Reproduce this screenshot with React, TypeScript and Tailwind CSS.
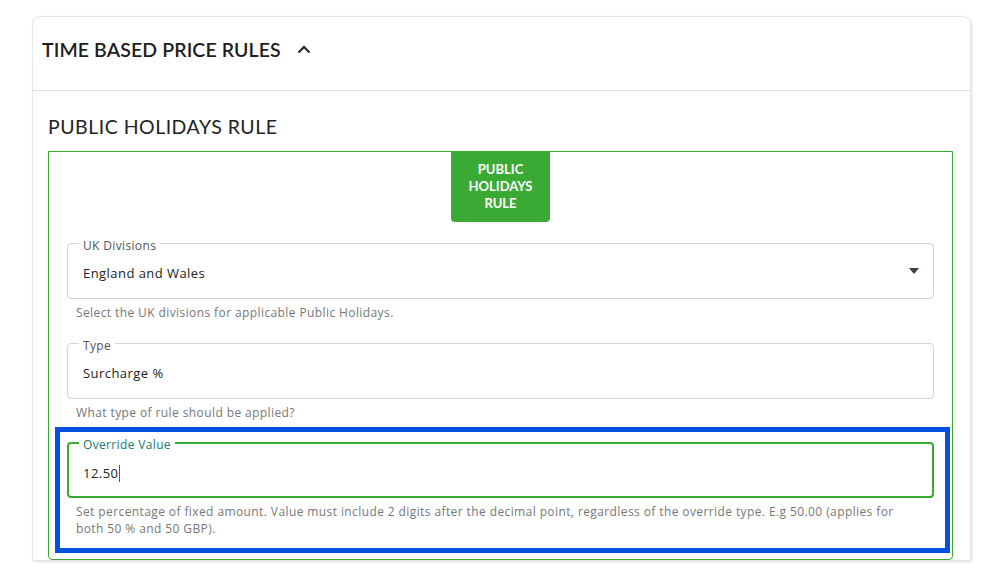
import React from 'react';

const GREEN = '#3aaa35';

function OutlinedField({
  label,
  value,
  focused = false,
  select = false,
}: {
  label: string;
  value: string;
  focused?: boolean;
  select?: boolean;
}) {
  return (
    <div
      className={
        focused
          ? 'relative flex h-[56px] items-center rounded-[4px] border-2 border-[#3aaa35] px-[14px] pt-[6px]'
          : 'relative flex h-[56px] items-center rounded-[4px] border border-[#d4d4d4] px-[15px] pt-[4px]'
      }
    >
      <span
        className={
          focused
            ? 'absolute -top-[7px] left-[10px] bg-white px-[4px] text-[12px] leading-[16px] tracking-[0.35px] text-[#17796f]'
            : 'absolute -top-[6px] left-[11px] bg-white px-[4px] text-[12px] leading-[16px] tracking-[0.35px] text-[#555]'
        }
      >
        {label}
      </span>
      <span className="text-[13px] leading-[18px] tracking-[0.45px] text-[#222]">{value}</span>
      {focused && <span className="ml-[1px] inline-block h-[17px] w-px bg-[#17796f]" />}
      {select && (
        <svg className="ml-auto mr-[-1px] mt-[-4px]" width="10" height="6" viewBox="0 0 10 6">
          <path d="M0 0 L10 0 L5 6 Z" fill="#3a3f3f" />
        </svg>
      )}
    </div>
  );
}

function Helper({ children }: { children: React.ReactNode }) {
  return (
    <p className="mt-[5px] pl-[9px] pr-[20px] text-[12px] leading-[17px] tracking-[0.4px] text-[#777]">{children}</p>
  );
}

export default function App() {
  return (
    <div className="min-h-[574px] bg-white pl-[32px] pt-[16px] font-['Open_Sans',sans-serif]">
      <div className="w-[939px] rounded-t-[8px] border border-[#e6e6e6] shadow-[1px_1px_3px_rgba(0,0,0,0.12)]">
        <div className="flex h-[74px] items-center border-b border-[#dedede] pb-[7px] pl-[9px]">
          <h2 className="font-['Lato',sans-serif] text-[19.5px] font-semibold tracking-[0.1px] text-[#1e1e1e]">
            TIME BASED PRICE RULES
          </h2>
          <svg className="ml-[16px] mt-[-1px]" width="14" height="9" viewBox="0 0 14 9">
            <path d="M1.5 7.5 L7 2 L12.5 7.5" fill="none" stroke="#222" strokeWidth="2" />
          </svg>
        </div>

        <div className="pl-[15px] pr-[17px] pt-[24px]">
          <h3 className="font-['Lato',sans-serif] text-[19.5px] leading-[24px] tracking-[0.5px] text-[#222]">
            PUBLIC HOLIDAYS RULE
          </h3>

          <div className="mt-[12px] rounded-b-[4px] border border-[#3aaa35] px-[18px] pb-[6px]">
            <div className="flex justify-center">
              <div
                className="w-[99px] rounded-b-[4px] pb-[10px] pt-[9px] text-center font-['Lato',sans-serif] text-[13px] font-bold leading-[17px] text-white"
                style={{ backgroundColor: GREEN }}
              >
                PUBLIC
                <br />
                HOLIDAYS
                <br />
                RULE
              </div>
            </div>

            <div className="mt-[21px]">
              <OutlinedField label="UK Divisions" value="England and Wales" select />
              <Helper>Select the UK divisions for applicable Public Holidays.</Helper>
            </div>

            <div className="mt-[22px]">
              <OutlinedField label="Type" value="Surcharge %" />
              <Helper>What type of rule should be applied?</Helper>
            </div>

            <div className="-ml-[12px] -mr-[16px] mt-[6px] border-[5px] border-[#0350e2] pb-[11px] pl-[7px] pr-[11px] pt-[10px]">
              <OutlinedField label="Override Value" value="12.50" focused />
              <Helper>
                Set percentage of fixed amount. Value must include 2 digits after the decimal point, regardless of the
                override type. E.g 50.00 (applies for both 50 % and 50 GBP).
              </Helper>
            </div>
          </div>
        </div>
      </div>
    </div>
  );
}
